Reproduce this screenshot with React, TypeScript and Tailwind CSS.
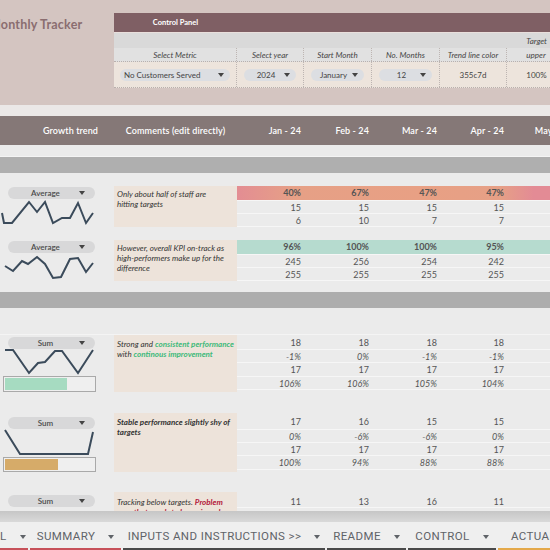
import React from 'react';

const LINE = '#3b4b5b';

function Caret({ className = '' }: { className?: string }) {
  return (
    <svg width="6" height="4" viewBox="0 0 6 4" className={className}>
      <path d="M0 0h6L3 4z" fill="currentColor" />
    </svg>
  );
}

function Pill({ label, className = '' }: { label: string; className?: string }) {
  return (
    <div className={`h-[12px] rounded-full bg-[#d8d8d9] flex items-center text-[8px] font-semibold text-[#4a4a4a] ${className}`}>
      <span className="flex-1 text-center pl-[4px]">{label}</span>
      <Caret className="mr-[10px] text-[#444]" />
    </div>
  );
}

function Spark({ pts, h }: { pts: string; h: number }) {
  return (
    <svg width="96" height={h} className="shrink-0 block">
      <polyline points={pts} fill="none" stroke={LINE} strokeWidth="2" strokeLinejoin="miter" />
    </svg>
  );
}

function Progress({ w, color }: { w: number; color: string }) {
  return (
    <div className="ml-[3px] w-[93px] h-[16px] border border-[#a9a9a9] bg-[#efefef] p-[1px] flex">
      <div className={`h-full ${color}`} style={{ width: w }} />
    </div>
  );
}

function DataRow({ vals, h, className = '' }: { vals: string[]; h: number; className?: string }) {
  return (
    <div
      className={`grid grid-cols-[67px_68px_68px_67px_67px] w-[337px] border-b border-[#f6f6f6] text-[9px] text-[#555] ${className}`}
      style={{ height: h }}
    >
      {vals.map((v, i) => (
        <div key={i} className="flex items-center justify-end pr-[3px]">{v}</div>
      ))}
    </div>
  );
}

function Tab({ label, w, bar, first }: { label: string; w: number; bar: string; first?: boolean }) {
  return (
    <div
      className={`shrink-0 h-full flex items-center gap-[13px] pt-[4px] border-b-2 ${bar} ${first ? 'justify-start' : 'justify-center'} mr-[2px]`}
      style={{ width: w }}
    >
      <span className="whitespace-nowrap">{label}</span>
      <Caret className="text-[#5f6368]" />
    </div>
  );
}

export default function App() {
  const ctlCols = 'grid grid-cols-[123px_67px_68px_68px_67px_67px]';
  return (
    <div className="w-[550px] h-[550px] overflow-hidden bg-[#ebebeb] font-['Lato',sans-serif] flex flex-col">
      <div className="h-[511px] shrink-0 overflow-hidden flex flex-col">
        {/* Top control area */}
        <div className="h-[105px] shrink-0 bg-[#d4c5c1] flex">
          <div className="w-[114px] shrink-0 overflow-hidden pt-[16px]">
            <div className="-ml-[11px] text-[12.5px] font-bold tracking-[0.2px] text-[#8a6d70] whitespace-nowrap">Monthly Tracker</div>
          </div>
          <div className="flex-1 min-w-0 pt-[13px] overflow-hidden">
            <div className="w-[460px]">
              <div className={`${ctlCols} h-[19px] bg-[#7f5f64]`}>
                <div className="flex items-center justify-center text-[7.5px] font-bold text-white">Control Panel</div>
              </div>
              <div className="h-[1px] bg-[#e9dfdc]" />
              <div className={`${ctlCols} h-[15px] bg-[#d9d9d9] text-[8px] italic text-[#444]`}>
                <div /><div /><div /><div /><div />
                <div className="flex items-end justify-center pb-[1px] -ml-[8px]">Target</div>
              </div>
              <div className={`${ctlCols} h-[14px] bg-[#e1e1e1] text-[8px] italic text-[#444] border-b border-dotted border-[#b9b0ad]`}>
                {['Select Metric', 'Select year', 'Start Month', 'No. Months', 'Trend line color', 'upper'].map((t, i) => (
                  <div key={i} className={`flex items-center justify-center border-r border-dotted border-[#bdb5b2] ${i === 5 ? '-ml-[8px]' : ''}`}>{t}</div>
                ))}
              </div>
              <div className={`${ctlCols} h-[26px] bg-[#ede4dc] text-[8px] text-[#444] border-b border-dotted border-[#b9b0ad]`}>
                <div className="flex items-center pl-[6px] pr-[6px] border-r border-dotted border-[#bdb5b2]">
                  <div className="w-full h-[12px] rounded-full bg-[#dcdee2] flex items-center pl-[4px] pr-[6px]">
                    <span className="flex-1">No Customers Served</span>
                    <Caret className="text-[#444]" />
                  </div>
                </div>
                {['2024', 'January', '12'].map((t) => (
                  <div key={t} className="flex items-center px-[7px] border-r border-dotted border-[#bdb5b2]">
                    <div className="w-full h-[12px] rounded-full bg-[#dcdee2] flex items-center pl-[4px] pr-[6px]">
                      <span className="flex-1 text-center">{t}</span>
                      <Caret className="text-[#444]" />
                    </div>
                  </div>
                ))}
                <div className="flex items-center justify-center border-r border-dotted border-[#bdb5b2]">355c7d</div>
                <div className="flex items-center justify-center -ml-[8px]">100%</div>
              </div>
            </div>
          </div>
        </div>

        <div className="h-[11px] shrink-0 bg-[#ebe8e7]" />

        {/* Column header */}
        <div className="h-[29px] shrink-0 bg-[#857877] flex items-center text-[9px] font-semibold tracking-[0.1px] text-white">
          <div className="w-[114px] shrink-0 pl-[43px]">Growth trend</div>
          <div className="w-[123px] shrink-0 text-center">Comments (edit directly)</div>
          <div className="grid grid-cols-[67px_68px_68px_67px_67px] w-[337px] shrink-0">
            {['Jan - 24', 'Feb - 24', 'Mar - 24', 'Apr - 24', 'May - 24'].map((m) => (
              <div key={m} className="text-right pr-[3px] whitespace-nowrap">{m}</div>
            ))}
          </div>
        </div>

        <div className="h-[12px] shrink-0 border-b border-[#f4f4f4]" />
        <div className="h-[16px] shrink-0 bg-[#afafaf]" />
        <div className="h-[13px] shrink-0" />

        {/* Group 1 */}
        <div className="h-[41px] shrink-0 flex">
          <div className="w-[114px] shrink-0 flex flex-col">
            <Pill label="Average" className="mt-[1px] ml-[8px] w-[87px]" />
            <Spark h={28} pts="2,14 4,24 12,24 29,3 37,13 45,3 53,24 62,19 70,19 78,4 86,24 93,14" />
          </div>
          <div className="w-[123px] shrink-0 bg-[#ede3da] pl-[3px] pt-[3px] text-[8px] italic leading-[10px] text-[#333] whitespace-nowrap">
            Only about half of staff are<br />hitting targets
          </div>
          <div className="flex-1 flex flex-col overflow-hidden">
            <DataRow
              h={15}
              vals={['40%', '67%', '47%', '47%', '']}
              className="font-bold text-[#3a3a3a] bg-[linear-gradient(90deg,#e38d93_0%,#e6a086_17%,#e8a084_55%,#e6a086_78%,#e38b95_88%)]"
            />
            <DataRow h={13} vals={['15', '15', '15', '15', '']} />
            <DataRow h={13} vals={['6', '10', '7', '7', '']} />
          </div>
        </div>

        <div className="h-[13px] shrink-0" />

        {/* Group 2 */}
        <div className="h-[41px] shrink-0 flex">
          <div className="w-[114px] shrink-0 flex flex-col">
            <Pill label="Average" className="mt-[1px] ml-[8px] w-[87px]" />
            <Spark h={28} pts="5,13 13,18 22,8 28,11 37,4 45,11 53,25 61,24 70,6 78,5 86,19 93,10" />
          </div>
          <div className="w-[123px] shrink-0 bg-[#ede3da] pl-[3px] pt-[3px] text-[8px] italic leading-[10px] text-[#333] whitespace-nowrap">
            However, overall KPI on-track as<br />high-performers make up for the<br />difference
          </div>
          <div className="flex-1 flex flex-col overflow-hidden">
            <DataRow h={15} vals={['96%', '100%', '100%', '95%', '']} className="font-bold text-[#3a3a3a] bg-[#b6dbcf]" />
            <DataRow h={13} vals={['245', '256', '254', '242', '']} />
            <DataRow h={13} vals={['255', '255', '255', '255', '']} />
          </div>
        </div>

        <div className="h-[11px] shrink-0" />
        <div className="h-[16px] shrink-0 bg-[#adadad]" />
        <div className="h-[27px] shrink-0 border-b border-[#f4f4f4]" />

        {/* Group 3 */}
        <div className="h-[57px] shrink-0 flex">
          <div className="w-[114px] shrink-0 flex flex-col">
            <Pill label="Sum" className="mt-[2px] ml-[8px] w-[87px]" />
            <Spark h={27} pts="5,1 13,1 29,24 38,14 45,13 55,2 62,2 78,24 93,1" />
            <Progress w={62} color="bg-[#a6dbc1]" />
          </div>
          <div className="w-[123px] shrink-0 bg-[#ede3da] pl-[3px] pt-[4px] text-[8px] italic leading-[10px] text-[#333] whitespace-nowrap">
            Strong and <span className="font-bold text-[#3fba7a]">consistent performance</span>
            <br />with <span className="font-bold text-[#3fba7a]">continous improvement</span>
          </div>
          <div className="flex-1 flex flex-col overflow-hidden pt-[1px]">
            <DataRow h={14} vals={['18', '18', '18', '18', '']} />
            <DataRow h={13} vals={['-1%', '0%', '-1%', '-1%', '']} className="italic" />
            <DataRow h={14} vals={['17', '17', '17', '17', '']} />
            <DataRow h={13} vals={['106%', '106%', '105%', '104%', '']} className="italic" />
          </div>
        </div>

        <div className="h-[21px] shrink-0" />

        {/* Group 4 */}
        <div className="h-[59px] shrink-0 flex">
          <div className="w-[114px] shrink-0 flex flex-col">
            <Pill label="Sum" className="mt-[4px] ml-[8px] w-[87px]" />
            <Spark h={28} pts="5,1 20,25 88,25 93,3" />
            <Progress w={53} color="bg-[#d6ab69]" />
          </div>
          <div className="w-[123px] shrink-0 bg-[#ede3da] pl-[3px] pt-[4px] text-[8px] italic font-bold leading-[10px] text-[#333] whitespace-nowrap">
            Stable performance slightly shy of<br />targets
          </div>
          <div className="flex-1 flex flex-col overflow-hidden pt-[2px]">
            <DataRow h={15} vals={['17', '16', '15', '15', '']} />
            <DataRow h={13} vals={['0%', '-6%', '-6%', '0%', '']} className="italic" />
            <DataRow h={13} vals={['17', '17', '17', '17', '']} />
            <DataRow h={14} vals={['100%', '94%', '88%', '88%', '']} className="italic" />
          </div>
        </div>

        <div className="h-[20px] shrink-0" />

        {/* Group 5 */}
        <div className="h-[40px] shrink-0 flex">
          <div className="w-[114px] shrink-0 flex flex-col">
            <Pill label="Sum" className="mt-[3px] ml-[8px] w-[87px]" />
          </div>
          <div className="w-[123px] shrink-0 bg-[#ede3da] pl-[3px] pt-[5px] text-[8px] italic leading-[10px] text-[#333] whitespace-nowrap">
            Tracking below targets. <span className="font-bold text-[#b3203a]">Problem</span>
            <br /><span className="font-bold text-[#b3203a]">area that needs to be reviewed</span>
          </div>
          <div className="flex-1 flex flex-col overflow-hidden pt-[3px]">
            <DataRow h={13} vals={['11', '13', '16', '11', '']} />
          </div>
        </div>
      </div>

      {/* scrollbar strip */}
      <div className="h-[11px] shrink-0 bg-[linear-gradient(180deg,#c6c6c6,#d9d9d9)]" />

      {/* Sheet tabs */}
      <div className="h-[28px] shrink-0 bg-[#efefef] flex font-['Roboto',sans-serif] text-[11.5px] tracking-[0.4px] text-[#5f6368] overflow-hidden">
        <Tab label="L" w={28} bar="border-[#c7515a]" first />
        <Tab label="SUMMARY" w={91} bar="border-[#c7515a]" />
        <Tab label="INPUTS AND INSTRUCTIONS >>" w={202} bar="border-[#4a4a4a]" />
        <Tab label="README" w={79} bar="border-[#4a4a4a]" />
        <Tab label="CONTROL" w={88} bar="border-[#4a4a4a]" />
        <Tab label="ACTUAL" w={90} bar="border-[#e4a94a]" />
      </div>
    </div>
  );
}
